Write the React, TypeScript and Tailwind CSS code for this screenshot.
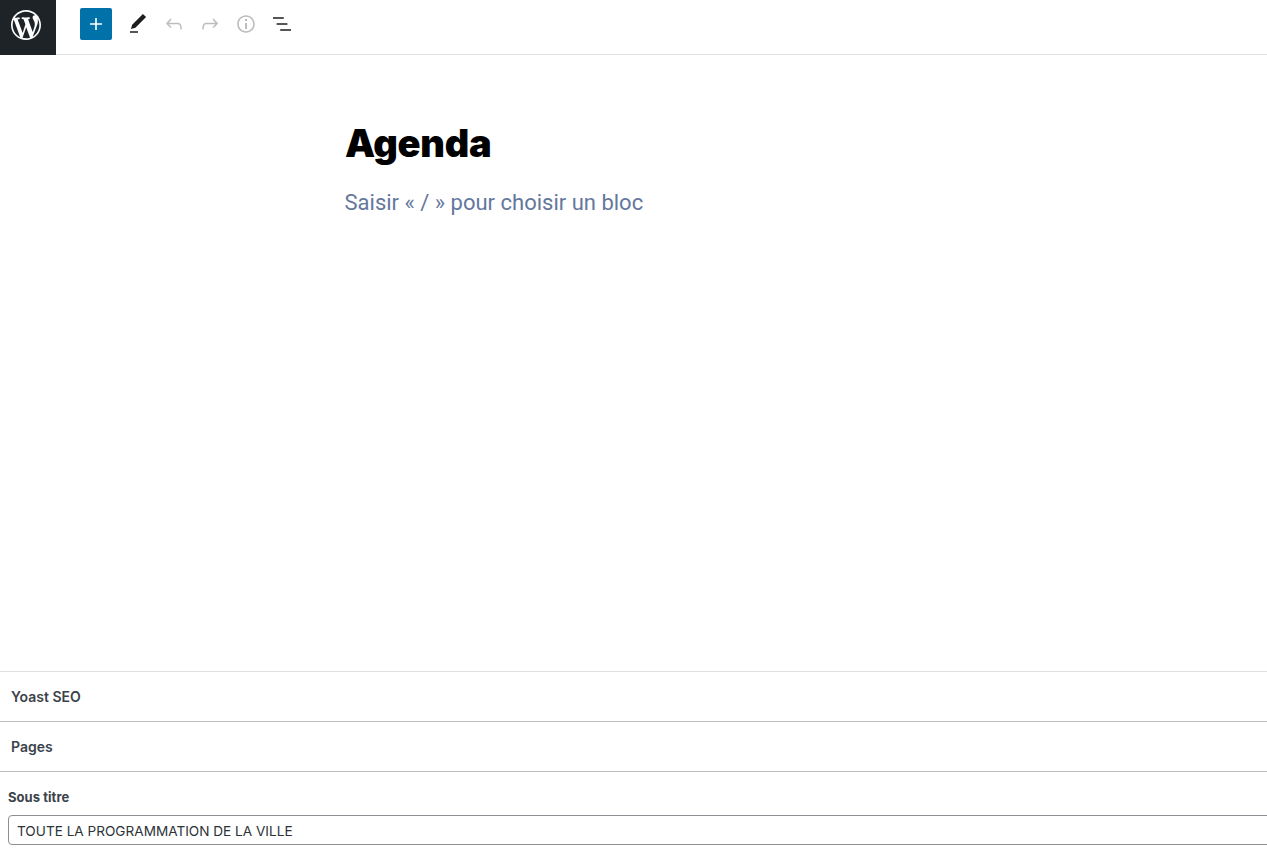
import React from 'react';

const ToolIcon: React.FC<{ d: string; className: string }> = ({ d, className }) => (
  <button className={`w-9 h-9 flex items-center justify-center ${className}`}>
    <svg xmlns="http://www.w3.org/2000/svg" viewBox="0 0 24 24" width="24" height="24" fill="currentColor">
      <path d={d} />
    </svg>
  </button>
);

const App: React.FC = () => {
  return (
    <div className="h-[857px] w-[1267px] overflow-hidden bg-white flex flex-col font-['Inter',sans-serif]">
      <header className="h-[55px] shrink-0 flex items-start border-b border-[#e0e0e0]">
        <div className="w-14 h-[55px] bg-[#1e2327] pt-[10px] pl-[11px] text-white">
          <svg xmlns="http://www.w3.org/2000/svg" viewBox="0 0 20 20" width="30" height="30" fill="currentColor">
            <path d="M20 10c0-5.51-4.49-10-10-10C4.48 0 0 4.49 0 10c0 5.52 4.48 10 10 10 5.51 0 10-4.48 10-10zM7.78 15.37L4.37 6.22c.55-.02 1.17-.08 1.17-.08.5-.06.44-1.13-.06-1.11 0 0-1.45.11-2.37.11-.18 0-.37 0-.58-.01C4.12 2.69 6.87 1.11 10 1.11c2.33 0 4.45.87 6.05 2.34-.68-.11-1.65.39-1.65 1.58 0 .74.45 1.36.9 2.1.35.61.55 1.36.55 2.46 0 1.49-1.4 5-1.4 5l-3.03-8.37c.54-.02.82-.17.82-.17.5-.05.44-1.25-.06-1.22 0 0-1.44.12-2.38.12-.87 0-2.33-.12-2.33-.12-.5-.03-.56 1.2-.06 1.22l.92.08 1.26 3.41zM17.41 10c.24-.64.74-1.87.43-4.25.7 1.29 1.05 2.71 1.05 4.25 0 3.29-1.73 6.24-4.4 7.78.97-2.59 1.94-5.2 2.92-7.78zM6.1 18.09C3.12 16.65 1.11 13.53 1.11 10c0-1.3.23-2.48.72-3.59C3.25 10.3 4.67 14.2 6.1 18.09zm4.03-6.63l2.58 6.98c-.86.29-1.76.45-2.71.45-.79 0-1.57-.11-2.29-.33.81-2.38 1.62-4.74 2.42-7.1z" />
          </svg>
        </div>
        <button className="ml-6 mt-2 w-8 h-8 rounded-[2px] bg-[#0071a9] text-white flex items-center justify-center">
          <svg xmlns="http://www.w3.org/2000/svg" viewBox="0 0 24 24" width="24" height="24" fill="currentColor">
            <path d="M18 11.2h-5.2V6h-1.6v5.2H6v1.6h5.2V18h1.6v-5.2H18z" />
          </svg>
        </button>
        <div className="flex items-center ml-2 mt-[6px]">
          <ToolIcon className="text-[#1e1e1e]" d="M20.1 5.1L16.9 2 6.2 12.7l-1.3 4.4 4.5-1.3L20.1 5.1zM4 20.8h8v-1.5H4v1.5z" />
          <ToolIcon className="text-[#bdbdbd]" d="M18.3 11.7c-.6-.6-1.4-.9-2.3-.9H6.7l2.9-3.3-1.1-1-4.5 5L8.5 16l1-1-2.7-2.7H16c.5 0 .9.2 1.3.5 1 1 1 3.4 1 4.5v.3h1.5v-.2c0-1.5 0-4.3-1.5-5.7z" />
          <ToolIcon className="text-[#bdbdbd]" d="M15.6 6.5l-1.1 1 2.9 3.3H8c-.9 0-1.7.3-2.3.9-1.4 1.5-1.4 4.2-1.4 5.6v.2h1.5v-.3c0-1.1 0-3.5 1-4.5.3-.3.7-.5 1.3-.5h9.2L14.5 15l1.1 1.1 4.6-4.6-4.6-5z" />
          <ToolIcon className="text-[#bdbdbd]" d="M12 3.2c-4.8 0-8.8 3.9-8.8 8.8 0 4.8 3.9 8.8 8.8 8.8 4.8 0 8.8-3.9 8.8-8.8 0-4.8-4-8.8-8.8-8.8zm0 16c-4 0-7.2-3.3-7.2-7.2C4.8 8 8 4.8 12 4.8s7.2 3.3 7.2 7.2c0 4-3.2 7.2-7.2 7.2zM11 17h2v-6h-2v6zm0-8h2V7h-2v2z" />
          <ToolIcon className="text-[#1e1e1e]" d="M13.8 5.2H3v1.5h10.8V5.2zm-3.6 12v1.5H21v-1.5H10.2zm7.2-6H6.6v1.5h10.8v-1.5z" />
        </div>
      </header>

      <main className="flex-1 pl-[345px] pt-[65px]">
        <h1 className="text-[38px] leading-[46px] font-black text-black tracking-[-0.3px]">Agenda</h1>
        <p className="-ml-[0.5px] mt-[21px] text-[22px] leading-[32px] text-[#64789c] font-['Roboto',sans-serif]">
          Saisir « / » pour choisir un bloc
        </p>
      </main>

      <section className="h-[186px] shrink-0 text-[#3c434a]">
        <div className="h-[50px] border-t border-[#e0e0e0] flex items-center pl-[11px] text-[14px] font-semibold">Yoast SEO</div>
        <div className="h-[50px] border-t border-[#bcbcbc] flex items-center pl-[11px] text-[14px] font-semibold">Pages</div>
        <div className="border-t border-[#bcbcbc] pl-2 pt-[18px]">
          <div className="text-[13px] leading-[15px] font-bold tracking-[0.05px]">Sous titre</div>
          <div className="mt-[10px] w-[1300px] h-[30px] border border-[#8c8f94] rounded-[4px] flex items-center pl-2 pt-[2px] text-[13.6px] text-[#2c3338]">
            TOUTE LA PROGRAMMATION DE LA VILLE
          </div>
        </div>
      </section>
    </div>
  );
};

export default App;
